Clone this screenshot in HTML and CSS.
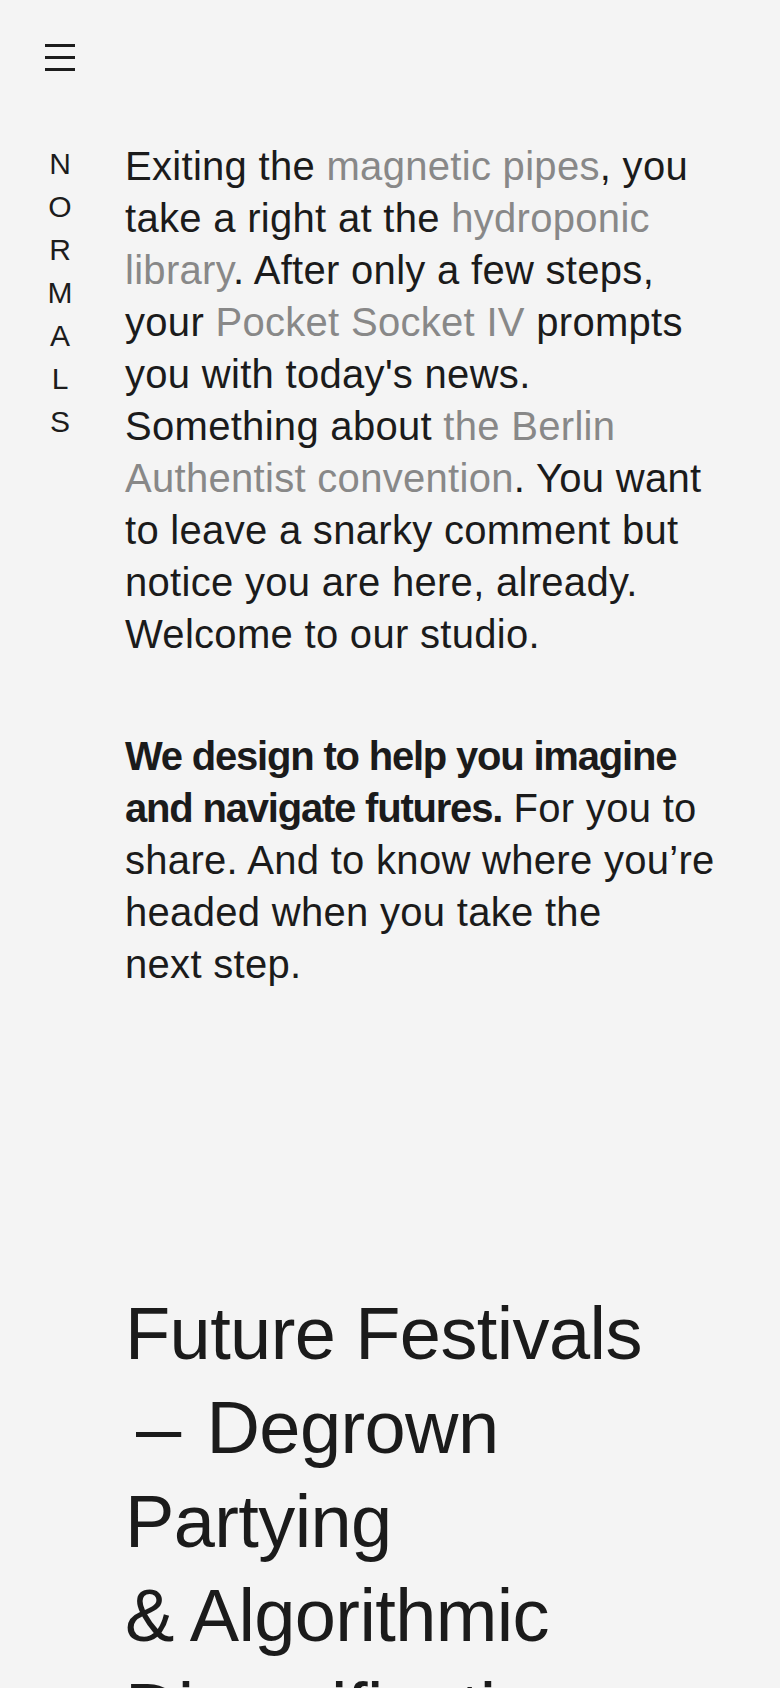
FILE: index.html
```html
<!DOCTYPE html>
<html lang="en">
<head>
<meta charset="utf-8">
<title>Normals</title>
<link rel="stylesheet" href="styles.css">
</head>
<body>
<header class="topbar">
  <button class="menu" aria-label="Menu">
    <span class="menu-line"></span>
    <span class="menu-line"></span>
    <span class="menu-line"></span>
  </button>
</header>
<div class="layout">
  <aside class="brand" aria-label="Normals">
    <span class="brand-letter">N</span>
    <span class="brand-letter">O</span>
    <span class="brand-letter">R</span>
    <span class="brand-letter">M</span>
    <span class="brand-letter">A</span>
    <span class="brand-letter">L</span>
    <span class="brand-letter">S</span>
  </aside>
  <main class="content">
    <p class="intro">Exiting the <a class="ref" href="#">magnetic pipes</a>, you take a right at the <a class="ref" href="#">hydroponic library</a>. After only a few steps, your <a class="ref" href="#">Pocket Socket IV</a> prompts you with today's news. Something about <a class="ref" href="#">the Berlin Authentist convention</a>. You want to leave a snarky comment but notice you are here, already. Welcome to our studio.</p>
    <p class="mission"><strong class="lead">We design to help you imagine and navigate futures.</strong> For you to share. And to know where you’re headed when you take the next&nbsp;step.</p>
    <h2 class="project">Future Festivals<br><span class="dash">–</span> Degrown<br>Partying<br>&amp; Algorithmic<br>Diversification</h2>
  </main>
</div>
</body>
</html>
```
FILE: styles.css
```css
html, body {
  margin: 0;
  padding: 0;
}

body {
  background: #f4f4f4;
  color: #1b1b1b;
  font-family: "Liberation Sans", Arial, Helvetica, sans-serif;
  width: 780px;
  min-height: 1688px;
  overflow: hidden;
}

.topbar {
  padding: 44px 0 0 45px;
  display: flex;
}

.menu {
  display: flex;
  flex-direction: column;
  gap: 9px;
  width: 30px;
  padding: 0;
  margin: 0;
  border: 0;
  background: none;
  cursor: pointer;
}

.menu-line {
  display: block;
  width: 30px;
  height: 3px;
  background: #1c1c1c;
}

.layout {
  margin-top: 69px;
  display: grid;
  grid-template-columns: 120px 1fr;
  column-gap: 5px;
}

.brand {
  display: flex;
  flex-direction: column;
  align-items: center;
  padding-top: 2px;
  font-size: 30px;
  line-height: 43px;
  color: #1c1c1c;
}

.brand-letter {
  display: block;
}

.content {
  padding-right: 52px;
  min-width: 0;
}

.intro,
.mission {
  margin: 0;
  font-size: 40px;
  line-height: 52px;
  letter-spacing: 0.3px;
  font-weight: 400;
}

.mission {
  margin-top: 70px;
}

.ref {
  color: #888888;
  text-decoration: none;
}

.lead {
  font-weight: 700;
  letter-spacing: -1.2px;
}

.project {
  margin: 297px 0 0;
  font-size: 74px;
  line-height: 94px;
  font-weight: 400;
  letter-spacing: -0.6px;
}

.dash {
  display: inline-block;
  margin-left: 13px;
  margin-right: 8px;
  transform: scaleX(1.1);
}
```
